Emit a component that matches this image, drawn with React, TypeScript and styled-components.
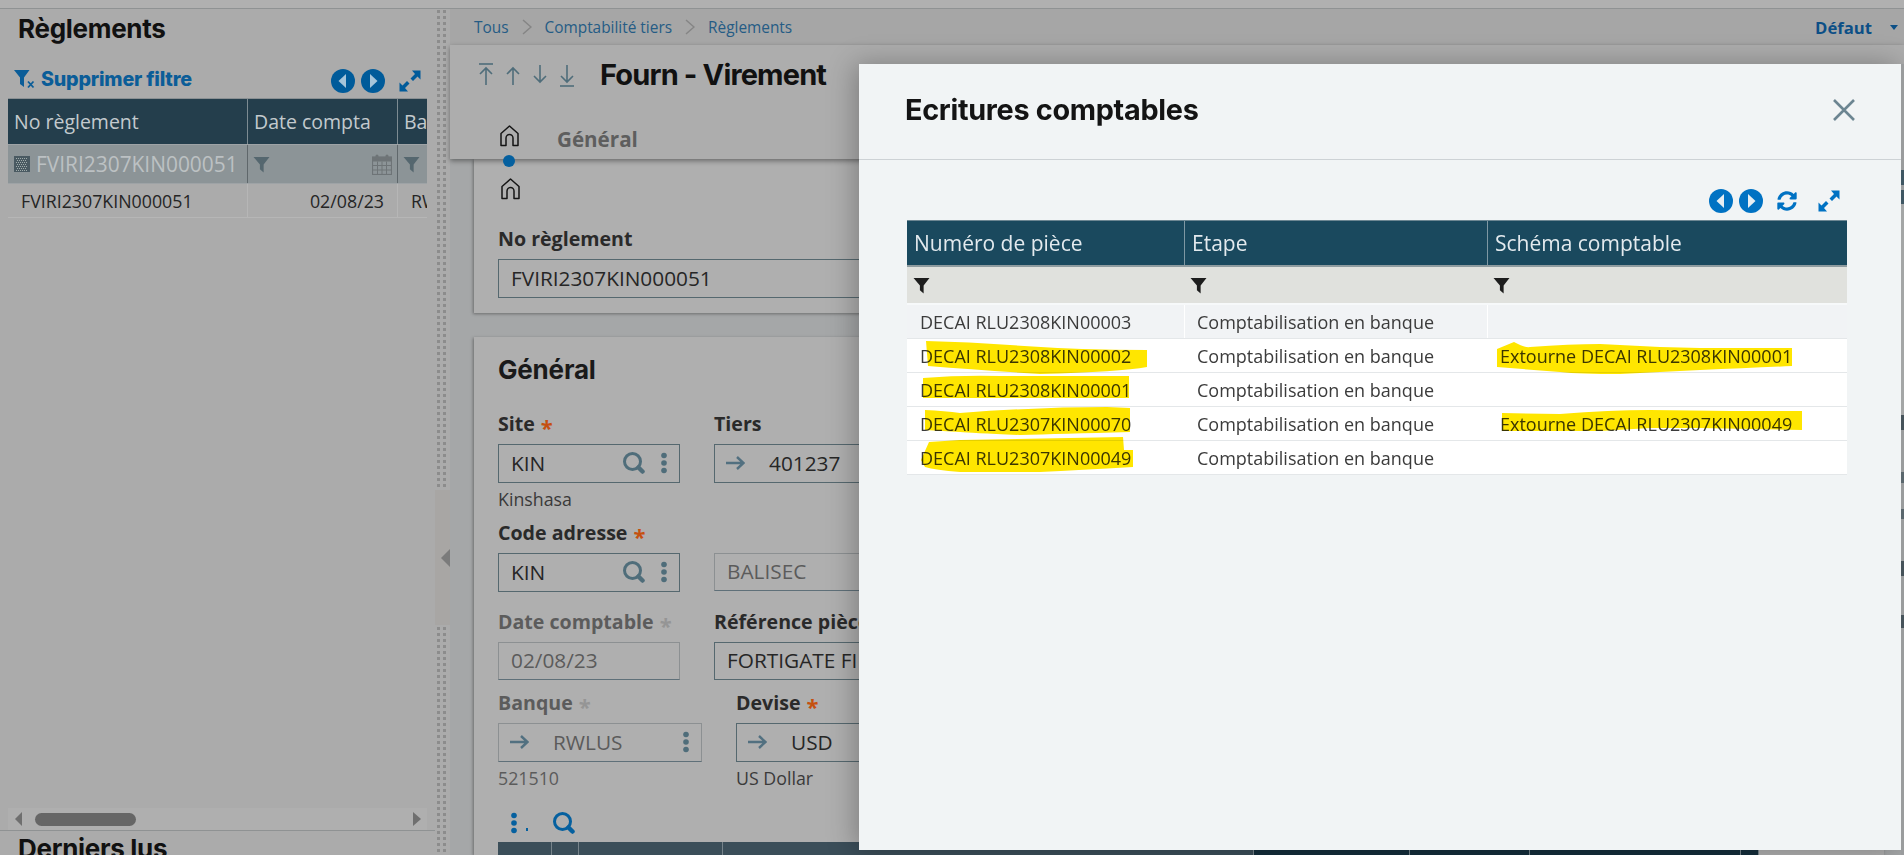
import React from "react";
import styled, { createGlobalStyle } from "styled-components";
import { FaSyncAlt } from "react-icons/fa";

const GlobalStyle = createGlobalStyle`
  html, body { margin: 0; padding: 0; overflow: hidden; background: #ababab; }
  body { font-family: "Open Sans", "Noto Sans", sans-serif; }
  * { box-sizing: border-box; }
`;

const HEAD = `"Inter", "Liberation Sans", sans-serif`;

const Page = styled.div`
  position: relative;
  width: 1904px;
  height: 855px;
  overflow: hidden;
  display: flex;
  flex-direction: column;
`;
const TopStrip = styled.div`
  height: 9px;
  flex: none;
  background: #b0b0b0;
  border-bottom: 1px solid #8f9293;
`;
const Body = styled.div`
  flex: 1;
  display: flex;
  min-height: 0;
`;

/* ---------- left panel ---------- */
const LeftPanel = styled.aside`
  width: 435px;
  flex: none;
  background: #ababab;
  display: flex;
  flex-direction: column;
  overflow: hidden;
`;
const PanelTitle = styled.h2<{ $top: number; $bottom?: number }>`
  margin: ${(p) => p.$top}px 0 ${(p) => p.$bottom ?? 0}px 18px;
  height: 30px;
  font: 700 26px/30px ${HEAD};
  letter-spacing: -0.3px;
  color: #111;
  flex: none;
  white-space: nowrap;
`;
const LeftToolbar = styled.div`
  margin-top: 19px;
  height: 35px;
  padding: 0 14px;
  display: flex;
  align-items: center;
  flex: none;
`;
const ClearFilter = styled.span`
  display: inline-flex;
  align-items: center;
  gap: 6px;
  font: 800 19.7px/24px ${HEAD};
  letter-spacing: -0.2px;
  color: #0b5d98;
  margin-top: -4px;
`;
const NavGroup = styled.span<{ $gap: number }>`
  margin-left: auto;
  display: inline-flex;
  align-items: center;
  gap: ${(p) => p.$gap}px;
`;
const LeftTable = styled.div`
  margin-left: 8px;
  width: 419px;
  overflow: hidden;
  flex: none;
`;
const LeftRow = styled.div<{ $kind: "head" | "filter" | "data" }>`
  display: grid;
  grid-template-columns: 239px 150px 40px;
  height: ${(p) => (p.$kind === "head" ? 47 : p.$kind === "filter" ? 39 : 34)}px;
  background: ${(p) => (p.$kind === "head" ? "#243e4c" : p.$kind === "filter" ? "#8c9497" : "#ababab")};
  color: ${(p) => (p.$kind === "head" ? "#c3cace" : p.$kind === "filter" ? "#bcc1c3" : "#252525")};
  font-size: ${(p) => (p.$kind === "data" ? 17.8 : p.$kind === "filter" ? 20.9 : 19.5)}px;
  border-bottom: 1px solid ${(p) => (p.$kind === "data" ? "#b6b6b6" : "#9ea3a6")};
  ${(p) => (p.$kind === "head" ? "border-top: 1px solid #8a9093;" : "")}
`;
const LeftCell = styled.div<{ $align?: string; $pad?: number; $sep?: string }>`
  display: flex;
  align-items: center;
  justify-content: ${(p) => p.$align || "flex-start"};
  padding: 0 ${(p) => p.$pad ?? 0}px;
  gap: 6px;
  overflow: hidden;
  white-space: nowrap;
  ${(p) => (p.$sep ? `border-left: 1px solid ${p.$sep};` : "")}
`;
const ClippedCell = styled.div`
  padding-left: 13px;
  display: flex;
  align-items: center;
  white-space: nowrap;
  overflow: hidden;
  border-left: 1px solid #b6b6b6;
`;
const Grow = styled.div`
  flex: 1;
`;
const HScroll = styled.div`
  margin-left: 8px;
  width: 419px;
  height: 22px;
  flex: none;
  background: #afafaf;
  display: flex;
  align-items: center;
  padding: 0 6px 0 7px;
`;
const ScrollThumb = styled.div`
  width: 101px;
  height: 13px;
  margin-left: 13px;
  border-radius: 7px;
  background: #666;
`;
const TriangleLeft = styled.div<{ $size: number; $color: string }>`
  width: 0;
  height: 0;
  border-top: ${(p) => p.$size}px solid transparent;
  border-bottom: ${(p) => p.$size}px solid transparent;
  border-right: ${(p) => p.$size}px solid ${(p) => p.$color};
`;
const TriangleRight = styled.div`
  margin-left: auto;
  width: 0;
  height: 0;
  border-top: 7px solid transparent;
  border-bottom: 7px solid transparent;
  border-left: 8px solid #6f6f6f;
`;
const Rule = styled.div`
  height: 1px;
  flex: none;
  background: #8f9293;
`;

/* ---------- splitter ---------- */
const Splitter = styled.div`
  width: 15px;
  flex: none;
  display: flex;
  flex-direction: column;
  background: #ababab;
`;
const Dots = styled.div<{ $h?: number }>`
  ${(p) => (p.$h ? `height: ${p.$h}px;` : "flex: 1;")}
  margin: 0 3px 0 2px;
  background-image:
    repeating-linear-gradient(0deg, #ababab 0 3px, transparent 3px 6px),
    repeating-linear-gradient(90deg, #8c8c8c 0 3px, transparent 3px 6.5px);
  background-size: 10px 100%;
  background-repeat: no-repeat;
`;
const SplitHandle = styled.div`
  height: 135px;
  flex: none;
  background: #a8a6a4;
  display: flex;
  align-items: center;
  justify-content: flex-end;
`;

/* ---------- main ---------- */
const Main = styled.main`
  flex: 1;
  min-width: 0;
  display: flex;
  flex-direction: column;
  background: #a5a7a8;
`;
const Crumbs = styled.nav`
  height: 36px;
  flex: none;
  background: #a6a6a6;
  padding: 0 6px 0 24px;
  display: flex;
  align-items: center;
  font-size: 15.4px;
  color: #255c85;
`;
const CrumbChevron = styled.svg`
  margin: 0 13px;
  width: 10px;
  height: 16px;
`;
const ViewName = styled.span`
  margin-left: auto;
  display: inline-flex;
  align-items: center;
  gap: 18px;
  font-weight: 700;
  font-size: 16.7px;
  color: #0c4f86;
`;
const Caret = styled.span`
  width: 0;
  height: 0;
  border-left: 4px solid transparent;
  border-right: 4px solid transparent;
  border-top: 5px solid #0c4f86;
`;
const TitleBar = styled.header`
  position: relative;
  z-index: 2;
  height: 114px;
  flex: none;
  background: #adadad;
  box-shadow: 0 2px 5px rgba(0, 0, 0, 0.4);
`;
const TitleRow = styled.div`
  height: 60px;
  padding-left: 29px;
  display: flex;
  align-items: center;
`;
const ArrowGroup = styled.div`
  display: flex;
  gap: 13px;
  margin-right: 26px;
`;
const PageTitle = styled.h1`
  margin: 0;
  font: 700 29px/40px ${HEAD};
  letter-spacing: -0.85px;
  color: #111;
`;
const TabRow = styled.div`
  margin-top: 20px;
  padding-left: 50px;
  display: flex;
  align-items: flex-start;
  gap: 38px;
`;
const TabLabel = styled.span`
  font-weight: 700;
  font-size: 20.6px;
  line-height: 26px;
  margin-top: 1px;
  color: #5e5e5e;
`;
const TabDot = styled.span`
  position: absolute;
  left: 53px;
  top: 110px;
  width: 12px;
  height: 12px;
  border-radius: 50%;
  background: #05609f;
`;
const Content = styled.div`
  flex: 1;
  min-height: 0;
  padding-left: 24px;
  padding-right: 20px;
  display: flex;
  flex-direction: column;
  gap: 24px;
  overflow: hidden;
`;
const Card = styled.section<{ $height?: number }>`
  ${(p) => (p.$height ? `height: ${p.$height}px; flex: none;` : "flex: 1;")}
  background: #afafaf;
  box-shadow: -1px 1px 3px rgba(0, 0, 0, 0.35);
  padding-left: 24px;
  overflow: hidden;
`;
const CardHome = styled.div`
  padding: 19px 0 0 3px;
  height: 40px;
`;
const CardTitle = styled.h3`
  margin: 16px 0 0;
  font: 700 26px/34px ${HEAD};
  letter-spacing: -0.2px;
  color: #1a1a1a;
`;
const FieldRow = styled.div<{ $mt: number; $gap?: number }>`
  margin-top: ${(p) => p.$mt}px;
  display: flex;
  align-items: flex-start;
  gap: ${(p) => p.$gap ?? 34}px;
`;
const Field = styled.div<{ $w: number }>`
  width: ${(p) => p.$w}px;
  flex: none;
`;
const Label = styled.div<{ $muted?: boolean }>`
  height: 22px;
  margin-bottom: 9px;
  font-weight: 700;
  font-size: 19.6px;
  line-height: 22px;
  white-space: nowrap;
  color: ${(p) => (p.$muted ? "#5c5c5c" : "#2a2a2a")};
`;
const Star = styled.span<{ $muted?: boolean }>`
  margin-left: 6px;
  font-size: 22px;
  line-height: 0;
  vertical-align: -5px;
  color: ${(p) => (p.$muted ? "#959595" : "#c5500f")};
`;
const InputBox = styled.div<{ $disabled?: boolean; $h?: number }>`
  height: ${(p) => p.$h ?? 39}px;
  display: flex;
  align-items: center;
  padding: 0 12px 2px 12px;
  border: 1px solid ${(p) => (p.$disabled ? "#8c9092" : "#55686f")};
  ${(p) => (p.$disabled ? "border-bottom-color: #5f7079;" : "")}
  font-size: 20.8px;
  color: ${(p) => (p.$disabled ? "#5b5b5b" : "#262626")};
  white-space: nowrap;
  overflow: hidden;
`;
const InputText = styled.span`
  margin-left: 24px;
`;
const TrailIcons = styled.span`
  margin-left: auto;
  display: inline-flex;
  align-items: center;
  gap: 16px;
`;
const Caption = styled.div<{ $muted?: boolean }>`
  margin-top: 4px;
  height: 24px;
  font-size: 17.8px;
  line-height: 24px;
  color: ${(p) => (p.$muted ? "#5b5b5b" : "#3a3a3a")};
`;
const GridTools = styled.div`
  margin-top: 22px;
  height: 21px;
  display: flex;
  align-items: center;
  padding-left: 13px;
`;
const TinyDot = styled.span`
  width: 2px;
  height: 3px;
  margin: 0 25px 2px 9px;
  align-self: flex-end;
  background: #05609f;
`;
const BackTable = styled.div`
  margin-top: 9px;
  height: 20px;
  display: flex;
`;
const BackCell = styled.div<{ $w: number; $dark?: boolean }>`
  width: ${(p) => p.$w}px;
  flex: none;
  background: ${(p) => (p.$dark ? "#142e3b" : "#3b4e59")};
  border-right: 1px solid #77848b;
`;

/* ---------- modal ---------- */
const Modal = styled.div`
  position: absolute;
  left: 859px;
  top: 64px;
  width: 1042px;
  height: 786px;
  z-index: 5;
  background: #f1f4f5;
  box-shadow: -4px 0 26px rgba(0, 0, 0, 0.28);
`;
const ModalHead = styled.div`
  height: 96px;
  padding: 0 46px 4px 46px;
  display: flex;
  align-items: center;
  justify-content: space-between;
  border-bottom: 1px solid #cdd2d5;
`;
const ModalTitle = styled.h2`
  margin: 0;
  font: 700 28.8px/40px ${HEAD};
  letter-spacing: -0.3px;
  color: #141414;
`;
const ModalBody = styled.div`
  padding: 0 54px 0 48px;
`;
const ModalTools = styled.div`
  height: 60px;
  padding: 29px 7px 0 0;
  display: flex;
  justify-content: flex-end;
  align-items: flex-start;
`;
const ToolSet = styled.span`
  display: inline-flex;
  align-items: center;
  gap: 6px;
`;
const Spaced = styled.span<{ $ml: number }>`
  margin-left: ${(p) => p.$ml}px;
  display: inline-flex;
`;
const TableWrap = styled.div`
  position: relative;
`;
const Row = styled.div<{ $kind: "head" | "filter" | "first" | "data" }>`
  display: grid;
  grid-template-columns: 277px 303px 360px;
  height: ${(p) => (p.$kind === "head" ? 47 : p.$kind === "filter" ? 38 : 34)}px;
  background: ${(p) =>
    p.$kind === "head" ? "#1a495e" : p.$kind === "filter" ? "#e0e1dd" : p.$kind === "first" ? "#f1f3f5" : "#ffffff"};
  color: ${(p) => (p.$kind === "head" ? "#e3eaee" : "#3b3b3b")};
  font-size: ${(p) => (p.$kind === "head" ? 21 : 18)}px;
  ${(p) => (p.$kind === "head" ? "border-top: 1px solid #6d8793; border-bottom: 2px solid #8e9b9f;" : "")}
  ${(p) => (p.$kind === "filter" ? "border-bottom: 2px solid #f7f9fa;" : "")}
  ${(p) => (p.$kind === "first" || p.$kind === "data" ? "border-bottom: 1px solid #e4e7e9;" : "")}
`;
const Cell = styled.div<{ $pad: number; $sep?: string }>`
  display: flex;
  align-items: center;
  padding-left: ${(p) => p.$pad}px;
  white-space: nowrap;
  overflow: hidden;
  ${(p) => (p.$sep ? `border-left: 1px solid ${p.$sep};` : "")}
`;
const Marker = styled.svg`
  position: absolute;
  left: 0;
  top: 0;
  width: 940px;
  height: 256px;
  overflow: visible;
  mix-blend-mode: multiply;
  pointer-events: none;
`;
const EdgeStrip = styled.div`
  position: absolute;
  right: 0;
  top: 64px;
  width: 3px;
  height: 791px;
  z-index: 6;
  background: linear-gradient(
    180deg,
    #9a9c9d 0 106px,
    #3f5763 106px 121px,
    #9a9c9d 121px 126px,
    #3f5763 126px 140px,
    #a4a6a6 140px 351px,
    #46535a 351px 366px,
    #9a9c9d 366px 408px,
    #5a676d 408px 419px,
    #9a9c9d 419px 445px,
    #5a676d 445px 455px,
    #9a9c9d 455px 497px,
    #46535a 497px 512px,
    #9a9c9d 512px 551px,
    #46535a 551px 564px,
    #9a9c9d 564px
  );
`;

/* ---------- icons ---------- */
const Funnel = ({ color, size = 17 }: { color: string; size?: number }) => (
  <svg width={size} height={size} viewBox="0 0 16 16" style={{ flex: "none" }}>
    <path d="M0.5 1h15L10 8v7.5L6.5 12.5V8z" fill={color} strokeLinejoin="round" />
  </svg>
);
const ClearFunnel = () => (
  <svg width="21" height="21" viewBox="0 0 21 21">
    <path d="M0 2h15.5L10 9.5V19L6 16V9.5z" fill="#0b5d98" />
    <path d="M14 13.5l5.5 6M19.5 13.5l-5.5 6" stroke="#0b5d98" strokeWidth="1.8" />
  </svg>
);
const NavCircle = ({ dir, color }: { dir: "l" | "r"; color: string }) => (
  <svg width="24" height="24" viewBox="0 0 24 24">
    <circle cx="12" cy="12" r="12" fill={color} />
    <path d={dir === "l" ? "M15 5L7.5 12L15 19z" : "M9 5L16.5 12L9 19z"} fill="#e6eef3" opacity={color === "#0072c3" ? 1 : 0.72} />
  </svg>
);
const Expand = ({ color }: { color: string }) => (
  <svg width="22" height="22" viewBox="0 0 22 22">
    <path d="M21.5 0.5v9l-3-3L14 11l-2.5-2.5L16 4l-3-3.5z" fill={color} />
    <path d="M0.5 21.5v-9l3 3L8 11l2.5 2.5L6 18l3 3.5z" fill={color} />
  </svg>
);
const Search = ({ color }: { color: string }) => (
  <svg width="22" height="22" viewBox="0 0 22 22">
    <circle cx="9.5" cy="9.5" r="8" fill="none" stroke={color} strokeWidth="3" />
    <path d="M15.5 15.5l4 4" stroke={color} strokeWidth="4.5" strokeLinecap="round" />
  </svg>
);
const Kebab = ({ color }: { color: string }) => (
  <svg width="6" height="22" viewBox="0 0 6 22">
    <circle cx="3" cy="3.5" r="2.8" fill={color} />
    <circle cx="3" cy="11" r="2.8" fill={color} />
    <circle cx="3" cy="18.5" r="2.8" fill={color} />
  </svg>
);
const ArrowRight = () => (
  <svg width="19" height="14" viewBox="0 0 19 14" style={{ flex: "none", marginLeft: -1 }}>
    <path d="M0 7h17M11 1l6.5 6-6.5 6" fill="none" stroke="#527080" strokeWidth="2.4" />
  </svg>
);
const Home = () => (
  <svg width="19" height="22" viewBox="0 0 19 22" style={{ display: "block", flex: "none" }}>
    <path d="M1 20.5V8.5L9.5 1 18 8.5v12h-5V13a3.5 3.5 0 0 0-7 0v7.5z" fill="none" stroke="#151515" strokeWidth="1.5" strokeLinejoin="round" />
  </svg>
);
const Calendar = () => (
  <svg width="20" height="21" viewBox="0 0 20 21">
    <rect x="0.5" y="3" width="19" height="17.5" fill="none" stroke="#6e7477" strokeWidth="1.2" />
    <rect x="0.5" y="3" width="19" height="4.5" fill="#6e7477" />
    <path d="M0.5 11.5h19M0.5 16h19M5.5 7.5v13M10 7.5v13M14.5 7.5v13" stroke="#6e7477" strokeWidth="1" />
    <rect x="3.5" y="0.5" width="3" height="5" rx="1.5" fill="#6e7477" />
    <rect x="13.5" y="0.5" width="3" height="5" rx="1.5" fill="#6e7477" />
  </svg>
);
const RowGlyph = () => (
  <svg width="16" height="16" viewBox="0 0 16 16" style={{ flex: "none" }}>
    <rect width="16" height="16" fill="#4a5a62" />
    <path d="M2 2.5h12M3 4.5h10M2 6.5h12M3 8.5h10M2 10.5h12M3 12.5h10M2 14.5h12" stroke="#a0acab" strokeWidth="1" strokeDasharray="1 1" />
  </svg>
);
const MoveArrow = ({ kind }: { kind: "first" | "up" | "down" | "last" }) => {
  const flip = kind === "down" || kind === "last";
  const bar = kind === "first" || kind === "last";
  return (
    <svg width="14" height="24" viewBox="0 0 14 24" style={{ transform: flip ? "scaleY(-1)" : undefined }}>
      {bar && <path d="M0 1h14" stroke="#4f6d7a" strokeWidth="1.6" />}
      <path d="M7 22V5M1 11L7 5l6 6" fill="none" stroke="#4f6d7a" strokeWidth="1.6" />
    </svg>
  );
};
const Chevron = () => (
  <CrumbChevron viewBox="0 0 10 16">
    <path d="M1 1l8 7-8 7" fill="none" stroke="#858585" strokeWidth="1.5" />
  </CrumbChevron>
);

const rows = [
  ["DECAI RLU2308KIN00003", ""],
  ["DECAI RLU2308KIN00002", "Extourne DECAI RLU2308KIN00001"],
  ["DECAI RLU2308KIN00001", ""],
  ["DECAI RLU2307KIN00070", "Extourne DECAI RLU2307KIN00049"],
  ["DECAI RLU2307KIN00049", ""],
];

export default function App() {
  return (
    <>
      <GlobalStyle />
      <Page>
        <TopStrip />
        <Body>
          <LeftPanel>
            <PanelTitle $top={5}>Règlements</PanelTitle>
            <LeftToolbar>
              <ClearFilter>
                <ClearFunnel />
                Supprimer filtre
              </ClearFilter>
              <NavGroup $gap={6}>
                <NavCircle dir="l" color="#005b9a" />
                <NavCircle dir="r" color="#005b9a" />
                <Spaced $ml={8}>
                  <Expand color="#005b9a" />
                </Spaced>
              </NavGroup>
            </LeftToolbar>
            <LeftTable>
              <LeftRow $kind="head">
                <LeftCell $pad={6}>No règlement</LeftCell>
                <LeftCell $pad={6} $sep="#7d8b92">Date compta</LeftCell>
                <LeftCell $pad={6} $sep="#7d8b92">Ba</LeftCell>
              </LeftRow>
              <LeftRow $kind="filter">
                <LeftCell $pad={6}>
                  <RowGlyph />
                  FVIRI2307KIN000051
                </LeftCell>
                <LeftCell $pad={5} $sep="#5f676b">
                  <Funnel color="#55676f" />
                  <Grow />
                  <Calendar />
                </LeftCell>
                <LeftCell $pad={5} $sep="#5f676b">
                  <Funnel color="#55676f" />
                </LeftCell>
              </LeftRow>
              <LeftRow $kind="data">
                <LeftCell $pad={13}>FVIRI2307KIN000051</LeftCell>
                <LeftCell $pad={13} $align="flex-end" $sep="#b6b6b6">02/08/23</LeftCell>
                <ClippedCell>RWLUS</ClippedCell>
              </LeftRow>
            </LeftTable>
            <Grow />
            <HScroll>
              <TriangleLeft $size={7} $color="#6f6f6f" />
              <ScrollThumb />
              <TriangleRight />
            </HScroll>
            <Rule />
            <PanelTitle $top={3} $bottom={-9}>Derniers lus</PanelTitle>
          </LeftPanel>
          <Splitter>
            <Dots />
            <SplitHandle>
              <TriangleLeft $size={9} $color="#7b7b7b" />
            </SplitHandle>
            <Dots $h={230} />
          </Splitter>
          <Main>
            <Crumbs>
              Tous
              <Chevron />
              Comptabilité tiers
              <Chevron />
              Règlements
              <ViewName>
                Défaut
                <Caret />
              </ViewName>
            </Crumbs>
            <TitleBar>
              <TitleRow>
                <ArrowGroup>
                  <MoveArrow kind="first" />
                  <MoveArrow kind="up" />
                  <MoveArrow kind="down" />
                  <MoveArrow kind="last" />
                </ArrowGroup>
                <PageTitle>Fourn - Virement</PageTitle>
              </TitleRow>
              <TabRow>
                <Home />
                <TabLabel>Général</TabLabel>
              </TabRow>
              <TabDot />
            </TitleBar>
            <Content>
              <Card $height={154}>
                <CardHome>
                  <Home />
                </CardHome>
                <FieldRow $mt={29}>
                  <Field $w={700}>
                    <Label>No règlement</Label>
                    <InputBox>FVIRI2307KIN000051</InputBox>
                  </Field>
                </FieldRow>
              </Card>
              <Card>
                <CardTitle>Général</CardTitle>
                <FieldRow $mt={26}>
                  <Field $w={182}>
                    <Label>
                      Site<Star>*</Star>
                    </Label>
                    <InputBox>
                      KIN
                      <TrailIcons>
                        <Search color="#4f6d7a" />
                        <Kebab color="#4f6d7a" />
                      </TrailIcons>
                    </InputBox>
                    <Caption>Kinshasa</Caption>
                  </Field>
                  <Field $w={300}>
                    <Label>Tiers</Label>
                    <InputBox>
                      <ArrowRight />
                      <InputText>401237</InputText>
                    </InputBox>
                  </Field>
                </FieldRow>
                <FieldRow $mt={11}>
                  <Field $w={182}>
                    <Label>
                      Code adresse<Star>*</Star>
                    </Label>
                    <InputBox>
                      KIN
                      <TrailIcons>
                        <Search color="#4f6d7a" />
                        <Kebab color="#4f6d7a" />
                      </TrailIcons>
                    </InputBox>
                  </Field>
                  <Field $w={300}>
                    <Label />
                    <InputBox $disabled $h={38}>BALISEC</InputBox>
                  </Field>
                </FieldRow>
                <FieldRow $mt={19}>
                  <Field $w={182}>
                    <Label $muted>
                      Date comptable<Star $muted>*</Star>
                    </Label>
                    <InputBox $disabled $h={38}>02/08/23</InputBox>
                  </Field>
                  <Field $w={300}>
                    <Label>Référence pièce</Label>
                    <InputBox $h={38}>FORTIGATE FI</InputBox>
                  </Field>
                </FieldRow>
                <FieldRow $mt={12}>
                  <Field $w={204}>
                    <Label $muted>
                      Banque<Star $muted>*</Star>
                    </Label>
                    <InputBox $disabled>
                      <ArrowRight />
                      <InputText>RWLUS</InputText>
                      <TrailIcons>
                        <Kebab color="#4f6d7a" />
                      </TrailIcons>
                    </InputBox>
                    <Caption $muted>521510</Caption>
                  </Field>
                  <Field $w={300}>
                    <Label>
                      Devise<Star>*</Star>
                    </Label>
                    <InputBox>
                      <ArrowRight />
                      <InputText>USD</InputText>
                    </InputBox>
                    <Caption>US Dollar</Caption>
                  </Field>
                </FieldRow>
                <GridTools>
                  <Kebab color="#05609f" />
                  <TinyDot />
                  <Search color="#05609f" />
                </GridTools>
                <BackTable>
                  <BackCell $w={54} />
                  <BackCell $w={27} />
                  <BackCell $w={144} />
                  <BackCell $w={531} />
                  <BackCell $w={156} $dark />
                  <BackCell $w={120} $dark />
                  <BackCell $w={211} $dark />
                  <BackCell $w={18} $dark />
                </BackTable>
              </Card>
            </Content>
          </Main>
        </Body>
        <Modal>
          <ModalHead>
            <ModalTitle>Ecritures comptables</ModalTitle>
            <svg width="22" height="22" viewBox="0 0 22 22">
              <path d="M1 1l20 20M21 1L1 21" stroke="#6c8591" strokeWidth="2.6" />
            </svg>
          </ModalHead>
          <ModalBody>
            <ModalTools>
              <ToolSet>
                <NavCircle dir="l" color="#0072c3" />
                <NavCircle dir="r" color="#0072c3" />
                <Spaced $ml={8}>
                  <FaSyncAlt size={20} color="#0072c3" />
                </Spaced>
                <Spaced $ml={15}>
                  <Expand color="#0072c3" />
                </Spaced>
              </ToolSet>
            </ModalTools>
            <TableWrap>
              <Row $kind="head">
                <Cell $pad={7}>Numéro de pièce</Cell>
                <Cell $pad={7} $sep="#7f98a3">Etape</Cell>
                <Cell $pad={7} $sep="#7f98a3">Schéma comptable</Cell>
              </Row>
              <Row $kind="filter">
                <Cell $pad={6}><Funnel color="#1d1d1d" /></Cell>
                <Cell $pad={6}><Funnel color="#1d1d1d" /></Cell>
                <Cell $pad={6}><Funnel color="#1d1d1d" /></Cell>
              </Row>
              {rows.map(([piece, schema], i) => (
                <Row key={piece} $kind={i === 0 ? "first" : "data"}>
                  <Cell $pad={13}>{piece}</Cell>
                  <Cell $pad={i === 0 ? 12 : 13} $sep={i === 0 ? "#ffffff" : undefined}>Comptabilisation en banque</Cell>
                  <Cell $pad={i === 0 ? 12 : 13} $sep={i === 0 ? "#ffffff" : undefined}>{schema}</Cell>
                </Row>
              ))}
              <Marker viewBox="907 220 940 256">
                <path fill="#ffe600" d="M926 341Q970 342 1010 345Q1080 350 1147 350L1147 367Q1120 372 1040 374Q980 370 928 366z" />
                <path fill="#ffe600" d="M923 378Q960 375 1000 376L1129 376L1129 398L1000 398L923 398z" />
                <path fill="#ffe600" d="M925 410Q945 411 960 413Q1040 407 1107 407L1130 408L1130 432Q1060 434 1020 435Q970 433 960 432L925 430z" />
                <path fill="#ffe600" d="M929 442L960 440L1123 437L1124 450L1133 450L1133 467Q1080 470 1040 472L960 472Q935 470 925 467L921 460z" />
                <path fill="#ffe600" d="M1497 349L1514 342Q1525 348 1530 347Q1570 344 1600 344Q1650 347 1700 348L1792 348L1792 366Q1750 368 1700 370Q1660 372 1620 374Q1580 374 1560 372L1497 367z" />
                <path fill="#ffe600" d="M1502 413L1560 414Q1610 410 1650 410L1730 411L1802 411L1802 430L1750 429L1700 428L1650 428L1600 431L1502 431z" />
              </Marker>
            </TableWrap>
          </ModalBody>
        </Modal>
        <EdgeStrip />
      </Page>
    </>
  );
}
